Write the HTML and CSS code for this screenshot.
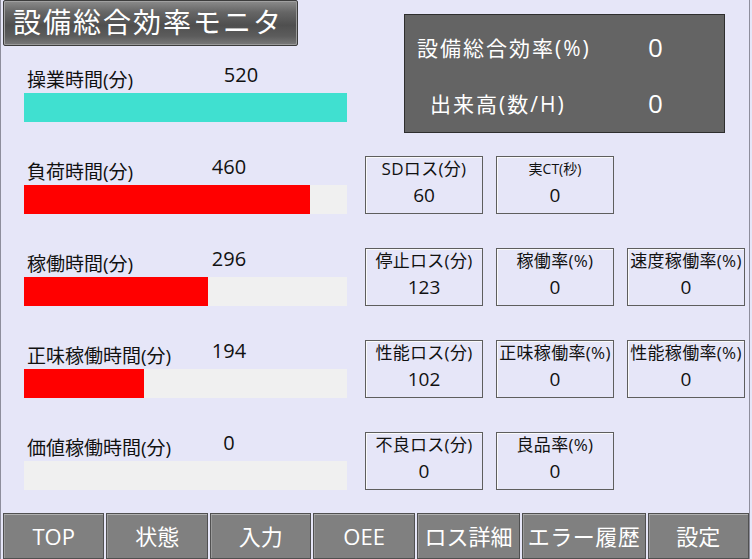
FILE: index.html
```html
<!DOCTYPE html>
<html>
  <head>
    <meta charset="utf-8">
    <link rel="stylesheet" href="styles.css">
  </head>
  <body>
    <div class="screen">
      <div class="main">
        <div class="left">
          <div class="title">設備総合効率モニタ</div>

          <div class="meter">
            <div class="meter-head">
              <span class="meter-label">操業時間(分)</span>
              <span class="meter-value shift">520</span>
            </div>
            <div class="bar"><div class="bar-fill teal" style="width: 100%"></div></div>
          </div>

          <div class="meter">
            <div class="meter-head">
              <span class="meter-label">負荷時間(分)</span>
              <span class="meter-value">460</span>
            </div>
            <div class="bar"><div class="bar-fill" style="width: 88.5%"></div></div>
          </div>

          <div class="meter">
            <div class="meter-head">
              <span class="meter-label">稼働時間(分)</span>
              <span class="meter-value">296</span>
            </div>
            <div class="bar"><div class="bar-fill" style="width: 57%"></div></div>
          </div>

          <div class="meter">
            <div class="meter-head">
              <span class="meter-label">正味稼働時間(分)</span>
              <span class="meter-value">194</span>
            </div>
            <div class="bar"><div class="bar-fill" style="width: 37.3%"></div></div>
          </div>

          <div class="meter">
            <div class="meter-head">
              <span class="meter-label">価値稼働時間(分)</span>
              <span class="meter-value">0</span>
            </div>
            <div class="bar"><div class="bar-fill" style="width: 0%"></div></div>
          </div>
        </div>

        <div class="right">
          <div class="summary">
            <div class="summary-row">
              <span class="summary-label">設備総合効率(%)</span>
              <span class="summary-value">0</span>
            </div>
            <div class="summary-row">
              <span class="summary-label indent">出来高(数/H)</span>
              <span class="summary-value">0</span>
            </div>
          </div>

          <div class="cards">
            <div class="card"><div class="card-label">SDロス(分)</div><div class="card-value">60</div></div>
            <div class="card"><div class="card-label small">実CT(秒)</div><div class="card-value">0</div></div>
            <div class="card-empty"></div>

            <div class="card"><div class="card-label">停止ロス(分)</div><div class="card-value">123</div></div>
            <div class="card"><div class="card-label">稼働率(%)</div><div class="card-value">0</div></div>
            <div class="card"><div class="card-label">速度稼働率(%)</div><div class="card-value">0</div></div>

            <div class="card"><div class="card-label">性能ロス(分)</div><div class="card-value">102</div></div>
            <div class="card"><div class="card-label">正味稼働率(%)</div><div class="card-value">0</div></div>
            <div class="card"><div class="card-label">性能稼働率(%)</div><div class="card-value">0</div></div>

            <div class="card"><div class="card-label">不良ロス(分)</div><div class="card-value">0</div></div>
            <div class="card"><div class="card-label">良品率(%)</div><div class="card-value">0</div></div>
          </div>
        </div>
      </div>

      <div class="nav">
        <div class="nav-btn">TOP</div>
        <div class="nav-btn">状態</div>
        <div class="nav-btn">入力</div>
        <div class="nav-btn">OEE</div>
        <div class="nav-btn">ロス詳細</div>
        <div class="nav-btn">エラー履歴</div>
        <div class="nav-btn">設定</div>
      </div>
    </div>
  </body>
</html>
```

FILE: styles.css
```css
body {
  margin: 0;
  padding: 0;
  background-color: rgb(230, 230, 248);
  font-family: "Open Sans", "Noto Sans CJK JP", sans-serif;
  color: #111;
}
.screen {
  width: 748px;
  height: 559px;
  border-left: 1px solid #8e8e9c;
  border-right: 1px solid #8e8e9c;
  display: flex;
  flex-direction: column;
}
.main {
  height: 513px;
  display: flex;
}
.left {
  width: 364px;
}
.title {
  margin-left: 2px;
  width: 284px;
  height: 44px;
  border: 1px solid #3c3c3c;
  border-radius: 2px;
  box-shadow: inset 1px 1px 0 #a0a0a0, inset -1px -1px 0 #9a9a9a;
  background: linear-gradient(#8c8c8c, #666 25%, #4f4f4f 55%, #5c5c5c 80%, #7a7a7a);
  color: #fff;
  font-size: 28px;
  line-height: 42px;
  padding-left: 9px;
  letter-spacing: 2px;
  white-space: nowrap;
}
.meter {
  margin-top: 38px;
  padding-left: 23px;
}
.title + .meter {
  margin-top: 22px;
}
.meter-head {
  display: flex;
  align-items: flex-end;
  height: 24px;
  margin-bottom: 1px;
}
.meter-label {
  width: 172px;
  padding-left: 3px;
  font-size: 19px;
  line-height: 24px;
  white-space: nowrap;
}
.meter-value {
  width: 60px;
  text-align: center;
  font-size: 20px;
  line-height: 24px;
  padding-bottom: 5px;
  box-sizing: border-box;
}
.meter-value.shift {
  width: 72px;
  padding-left: 12px;
}
.bar {
  width: 323px;
  height: 29px;
  background-color: #f0f0f0;
}
.bar-fill {
  height: 100%;
  background-color: #ff0000;
}
.bar-fill.teal {
  background-color: #40e0d0;
}
.right {
  flex: 1;
}
.summary {
  margin-top: 14px;
  margin-left: 39px;
  width: 321px;
  height: 119px;
  border: 1px solid #2e2e2e;
  background-color: #646464;
  color: #fff;
  padding-top: 18px;
  padding-left: 12px;
  box-sizing: border-box;
  display: flex;
  flex-direction: column;
  gap: 28px;
}
.summary-row {
  display: flex;
  height: 28px;
  align-items: center;
}
.summary-label {
  width: 231px;
  font-size: 21px;
  letter-spacing: 2px;
  white-space: nowrap;
}
.summary-label.indent {
  padding-left: 13px;
  box-sizing: border-box;
}
.summary-value {
  font-size: 26px;
}
.cards {
  margin-top: 23px;
  display: grid;
  grid-template-columns: 118px 118px 118px;
  grid-auto-rows: 58px;
  column-gap: 13px;
  row-gap: 34px;
}
.card {
  border: 1px solid #5e5e5e;
  box-shadow: inset 1px 1px 0 #fafafa;
  text-align: center;
  white-space: nowrap;
}
.card-label {
  font-size: 17px;
  line-height: 20px;
  padding-top: 2px;
  letter-spacing: 0.3px;
}
.card-label.small {
  font-size: 14px;
  letter-spacing: 0;
}
.card-value {
  font-size: 19px;
  line-height: 24px;
  margin-top: 4px;
}
.nav {
  height: 46px;
  display: flex;
  gap: 2px;
  padding-left: 2px;
}
.nav-btn {
  width: 100px;
  height: 44px;
  background-color: #808080;
  border: 1px solid #505050;
  box-shadow: inset 0 1px 0 #b0b0b0, inset 1px 0 0 #9a9a9a;
  color: #fff;
  font-size: 22px;
  line-height: 44px;
  text-align: center;
  white-space: nowrap;
}
.nav-btn:nth-child(5) {
  width: 102px;
}
.nav-btn:nth-child(6) {
  width: 122px;
  letter-spacing: 0.5px;
}
```
